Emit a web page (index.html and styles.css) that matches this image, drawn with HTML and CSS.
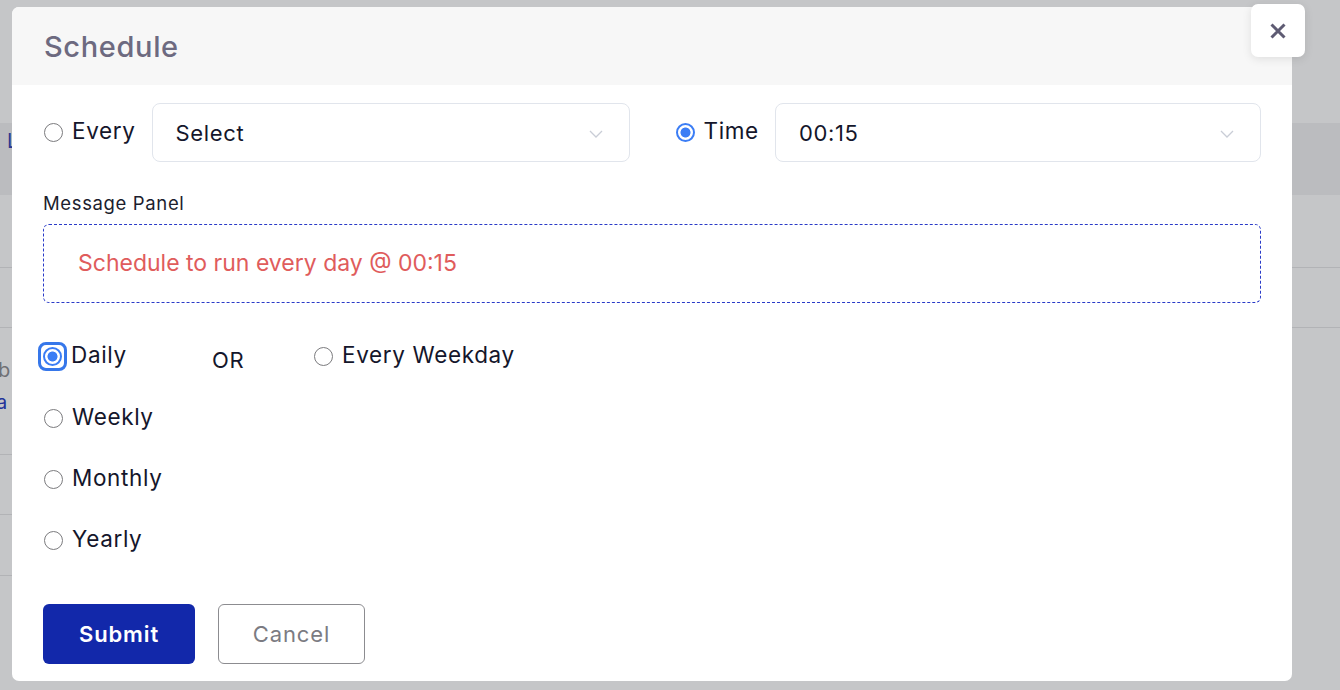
FILE: index.html
```html
<!DOCTYPE html>
<html lang="en">

<head>
    <meta charset="UTF-8">
    <title>Schedule</title>
    <link rel="stylesheet" href="styles.css">
</head>

<body>
    <!-- app page sitting behind the dialog -->
    <div class="page">
        <div class="page-top"></div>
        <div class="page-band"><span class="page-link">L</span></div>
        <div class="page-row page-row-1"></div>
        <div class="page-row page-row-2"></div>
        <div class="page-row page-row-3 page-row-short">
            <div class="page-text">b</div>
            <div class="page-text page-text-link">a</div>
        </div>
        <div class="page-row page-row-4 page-row-short"></div>
        <div class="page-row page-row-5 page-row-short"></div>
    </div>

    <div class="backdrop">
        <div class="modal">
            <button class="modal-close" type="button">
                <svg width="16" height="16" viewBox="0 0 16 16">
                    <path d="M1.5 1.5L14.5 14.5M14.5 1.5L1.5 14.5" stroke="#5e5b73" stroke-width="3" fill="none" />
                </svg>
            </button>

            <div class="modal-header">
                <h2 class="modal-title">Schedule</h2>
            </div>

            <div class="modal-body">
                <div class="freq-row">
                    <label class="freq-option">
                        <input class="radio" type="radio" name="mode">
                        <span class="opt-text">Every</span>
                        <div class="select">
                            <span>Select</span>
                            <svg class="chevron" width="14" height="8" viewBox="0 0 14 8">
                                <path d="M1 1L7 7L13 1" stroke="#c9cdd6" stroke-width="1.3" fill="none" />
                            </svg>
                        </div>
                    </label>
                    <label class="freq-option">
                        <input class="radio" type="radio" name="mode" checked>
                        <span class="opt-text">Time</span>
                        <div class="select">
                            <span>00:15</span>
                            <svg class="chevron" width="14" height="8" viewBox="0 0 14 8">
                                <path d="M1 1L7 7L13 1" stroke="#c9cdd6" stroke-width="1.3" fill="none" />
                            </svg>
                        </div>
                    </label>
                </div>

                <div class="field-label">Message Panel</div>
                <div class="message">Schedule to run every day @ 00:15</div>

                <div class="repeat">
                    <div class="repeat-row repeat-row-first">
                        <label class="option option-first">
                            <span class="focus-ring"><input class="radio" type="radio" name="repeat" checked></span>
                            <span class="opt-text">Daily</span>
                        </label>
                        <span class="or">OR</span>
                        <label class="option">
                            <input class="radio" type="radio" name="repeat">
                            <span class="opt-text">Every Weekday</span>
                        </label>
                    </div>
                    <div class="repeat-row">
                        <label class="option">
                            <input class="radio" type="radio" name="repeat">
                            <span class="opt-text">Weekly</span>
                        </label>
                    </div>
                    <div class="repeat-row">
                        <label class="option">
                            <input class="radio" type="radio" name="repeat">
                            <span class="opt-text">Monthly</span>
                        </label>
                    </div>
                    <div class="repeat-row">
                        <label class="option">
                            <input class="radio" type="radio" name="repeat">
                            <span class="opt-text">Yearly</span>
                        </label>
                    </div>
                </div>

                <div class="actions">
                    <button class="btn btn-primary" type="button">Submit</button>
                    <button class="btn btn-secondary" type="button">Cancel</button>
                </div>
            </div>
        </div>
    </div>
</body>

</html>
```

FILE: styles.css
```css
* {
    box-sizing: border-box;
}

body {
    margin: 0;
    width: 1340px;
    height: 690px;
    overflow: hidden;
    position: relative;
    background: #c5c6c8;
    font-family: Inter, "Noto Sans", sans-serif;
    letter-spacing: 0.04em;
    color: #14162b;
}

/* page behind the overlay */
.page-top {
    height: 123px;
}

.page-band {
    height: 72px;
    background: #bbbcbf;
    padding: 6px 0 0 7px;
}

.page-link {
    font-size: 20px;
    color: #2b378f;
}

.page-row {
    border-bottom: 1px solid #b2b3b6;
}

.page-row-1 {
    height: 73px;
}

.page-row-2 {
    height: 60px;
}

.page-row-3 {
    height: 127px;
    padding-top: 26px;
}

.page-row-4 {
    height: 60px;
}

.page-row-5 {
    height: 61px;
}

.page-row-short {
    width: 1000px;
}

.page-text {
    font-size: 20px;
    line-height: 32px;
    margin-left: -2px;
    color: #6f7075;
}

.page-text-link {
    margin-left: -4px;
    color: #23339a;
}

/* dialog */
.backdrop {
    position: absolute;
    left: 0;
    top: 0;
    width: 100%;
    height: 100%;
    padding: 7px 0 0 12px;
}

.modal {
    position: relative;
    width: 1280px;
    height: 674px;
    background: #fff;
    border-radius: 7px;
}

.modal-header {
    height: 78px;
    background: #f7f7f7;
    border-radius: 7px 7px 0 0;
    padding: 0 32px;
    display: flex;
    align-items: center;
}

.modal-title {
    margin: 0;
    font-size: 29px;
    font-weight: 500;
    color: #6d6a80;
}

.modal-close {
    position: absolute;
    top: -3px;
    right: -13px;
    width: 54px;
    height: 53px;
    border: none;
    border-radius: 7px;
    background: #fff;
    box-shadow: 0 2px 10px rgba(0, 0, 0, 0.1);
    display: flex;
    align-items: center;
    justify-content: center;
    padding: 0;
}

.modal-body {
    padding: 18px 31px 0;
}

.freq-row {
    display: grid;
    grid-template-columns: 1fr 1fr;
    column-gap: 45px;
}

.freq-option {
    display: flex;
    align-items: center;
    font-size: 22.5px;
}

.radio {
    appearance: none;
    -webkit-appearance: none;
    flex: none;
    width: 19px;
    height: 19px;
    margin: 0 9px 0 1px;
    border: 1px solid #7b7b7e;
    border-radius: 50%;
    background: #fff;
}

.radio:checked {
    border: 2px solid #3b7df5;
    background: radial-gradient(circle, #3b7df5 0 4.6px, #fff 5.4px);
}

.opt-text {
    padding-bottom: 4px;
}

.select {
    flex: 1;
    height: 59px;
    margin-left: 16px;
    border: 1px solid #e1e5ec;
    border-radius: 8px;
    padding: 0 26px 0 23px;
    display: flex;
    align-items: center;
    justify-content: space-between;
    font-size: 22px;
}

.chevron {
    margin-top: 3px;
}

.field-label {
    margin-top: 30px;
    font-size: 18.5px;
    color: #1c1e2e;
}

.message {
    margin-top: 10px;
    height: 79px;
    border: 1px dashed #2a3bc8;
    border-radius: 6px;
    padding: 0 34px 2px;
    display: flex;
    align-items: center;
    font-size: 23px;
    letter-spacing: 0;
    color: #e05c5c;
}

.repeat {
    margin-top: 22px;
}

.repeat-row {
    height: 61px;
    display: flex;
    align-items: center;
}

.repeat-row-first {
    height: 63px;
}

.option {
    display: flex;
    align-items: center;
    font-size: 22.5px;
}

.option-first {
    width: 169px;
}

.focus-ring {
    display: flex;
    padding: 2px;
    margin: -5px 4px -5px -5px;
    border: 3px solid #3677ea;
    border-radius: 8px;
}

.focus-ring .radio {
    margin: 0;
}

.or {
    width: 101px;
    margin-top: 7px;
    font-size: 22px;
}

.actions {
    display: flex;
    gap: 23px;
    margin-top: 33px;
}

.btn {
    height: 60px;
    border-radius: 6px;
    font-family: inherit;
    font-size: 22px;
    letter-spacing: 0.04em;
    cursor: pointer;
}

.btn-primary {
    width: 152px;
    border: none;
    background: #1228aa;
    color: #fff;
    font-weight: 600;
}

.btn-secondary {
    width: 147px;
    border: 1px solid #8c8c90;
    background: #fff;
    color: #7b7b82;
}
```
